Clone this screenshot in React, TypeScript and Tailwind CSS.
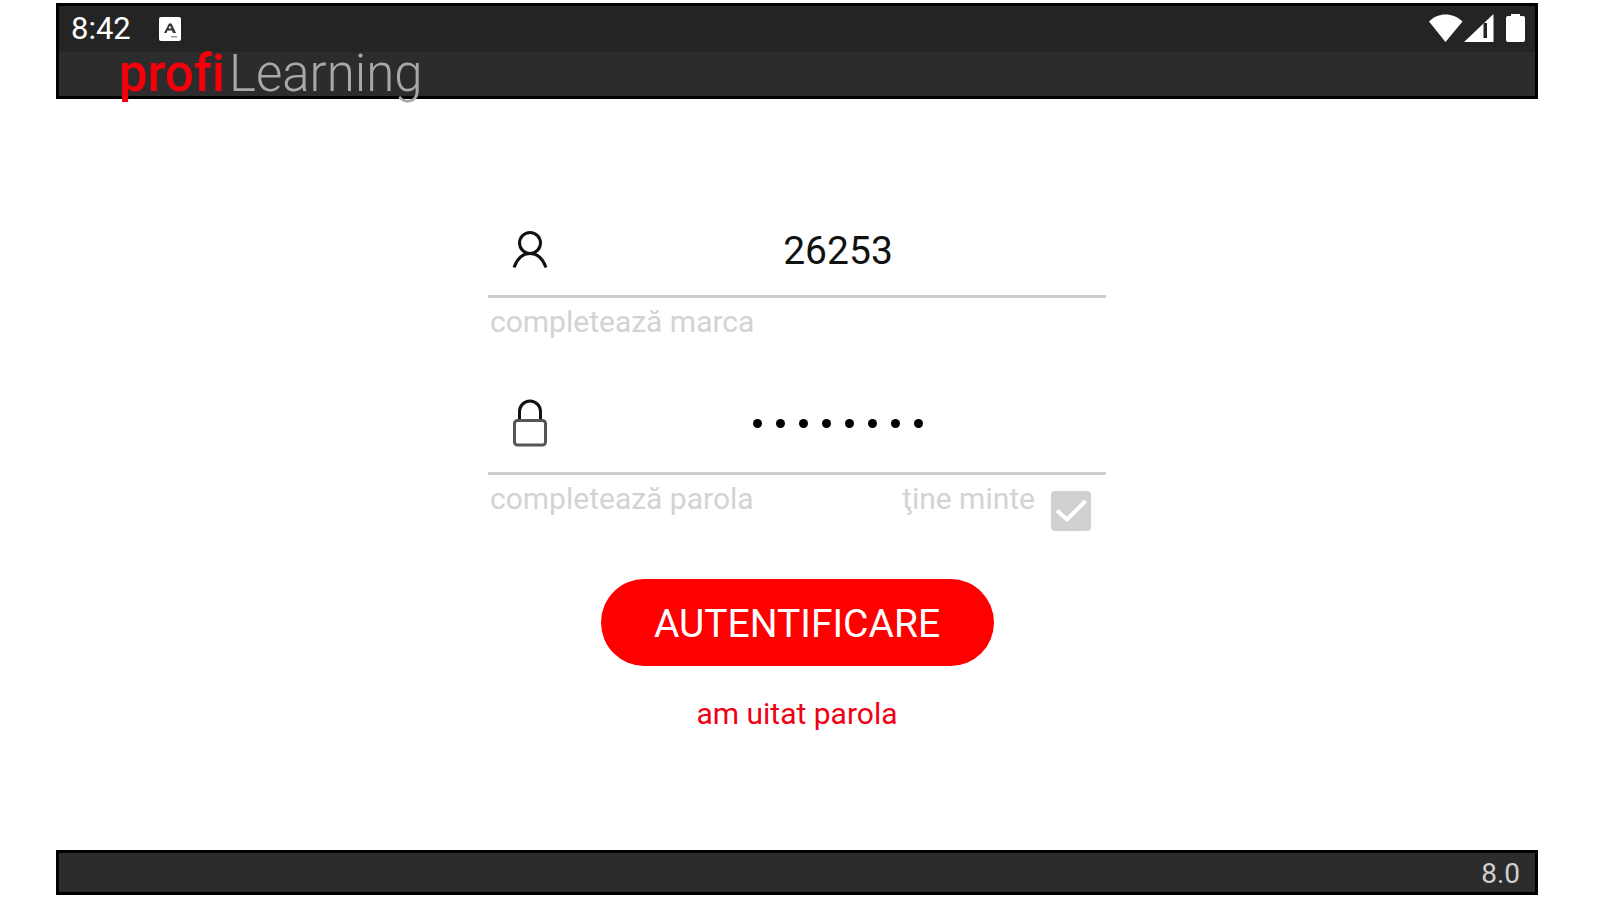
import { useState } from "react";
import type { InputHTMLAttributes, ReactNode } from "react";

function NotificationIcon() {
    return (
        <svg viewBox="0 0 22 24" className="w-[22px] h-6" aria-hidden="true">
            <rect width="22" height="24" rx="2" fill="#fff" />
            <path fillRule="evenodd" d="M5 16 10 6.500h2.500L17 16h-3l-1-2.500H8.500L7.500 16zM9.500 11.500h3L11 8.500z" fill="#333" />
            <path d="M12 19h6v1.500h-6z" fill="#999" />
        </svg>
    );
}

function StatusIcons() {
    return (
        <svg viewBox="0 0 98 30" className="w-[98px] h-[30px]" fill="#fff" aria-label="Wi-Fi, semnal, baterie" role="img">
            <path d="M1 7.500C10-2 25-2 34.500 7.500L17.500 28z" />
            <path fillRule="evenodd" d="M65.500 0v28H36zM55.500 9v15h3.500V9z" />
            <path d="M83 0h9v2h3q2 0 2 2v22q0 2-2 2H80q-2 0-2-2V4q0-2 2-2h3z" />
        </svg>
    );
}

function UserIcon() {
    return (
        <svg viewBox="0 0 36 38" className="w-9 h-[38px]" fill="none" stroke="#111" strokeWidth="3" aria-hidden="true">
            <circle cx="18" cy="12" r="10.500" />
            <path d="M2 36.500C5 28 10 22.500 18 22.500S31 28 34 36.500" />
        </svg>
    );
}

function LockIcon() {
    return (
        <svg viewBox="0 0 36 48" className="w-9 h-12" fill="none" aria-hidden="true">
            <path d="M7.500 21V12.500a10.500 10.500 0 0 1 21 0V21" stroke="#111" strokeWidth="3" />
            <rect x="2.500" y="21.500" width="31" height="24.500" rx="3" stroke="#555" strokeWidth="3" />
        </svg>
    );
}

interface FieldProps extends InputHTMLAttributes<HTMLInputElement> {
    icon: ReactNode;
    mask?: ReactNode;
}
function Field({ icon, mask, className, ...props }: FieldProps) {
    return (
        <div className="flex items-center border-b-3 border-[#cdcdcd]">
            <span className="flex w-[82px] shrink-0 pl-6">{icon}</span>
            <div className="relative min-w-0 flex-1">
                <input {...props} className={"block w-full bg-transparent text-center text-[39px] outline-none " + className} />
                {mask}
            </div>
        </div>
    );
}

// wide spaced dots drawn over the password input, which keeps its own text transparent
function PasswordDots({ length }: { length: number }) {
    return (
        <div className="pointer-events-none absolute inset-0 flex items-center justify-center gap-3.5" aria-hidden="true">
            {Array.from({ length }, (_, i) => (
                <span key={i} className="size-[9px] rounded-full bg-black" />
            ))}
        </div>
    );
}

export default function App() {
    const [mark, setMark] = useState("26253");
    const [password, setPassword] = useState("parola12");
    const [remember, setRemember] = useState(true);

    return (
        <div className="flex min-h-screen flex-col bg-white pt-[3px] pr-[62px] pb-[5px] pl-14 font-['Roboto',sans-serif]">
            <header className="border-3 border-black bg-[#2c2c2c] text-white">
                <div className="flex h-[46px] items-center justify-between bg-[#242424] pr-[9px] pl-3">
                    <div className="flex items-center gap-7 text-[31px] leading-10">
                        <span>8:42</span>
                        <NotificationIcon />
                    </div>
                    <StatusIcons />
                </div>
                <h1 className="flex h-11 items-center gap-1 pl-[60px] text-[51px] leading-[44px] font-light text-[#a8a8a8] [font-variant-ligatures:none]">
                    <span className="font-medium text-[#f5000a]">profi</span>
                    <span>Learning</span>
                </h1>
            </header>

            <main className="flex flex-1 flex-col items-center justify-center pb-2.5">
                <form className="flex w-full max-w-[618px] flex-col" onSubmit={(e) => e.preventDefault()}>
                    <Field
                        id="mark"
                        icon={<UserIcon />}
                        className="h-[90px] pt-0.5 text-[#111]"
                        value={mark}
                        onChange={(e) => setMark(e.target.value)}
                    />
                    <label htmlFor="mark" className="mt-1 pl-0.5 text-[30px] leading-10 text-[#d3d3d3]">completează marca</label>

                    <div className="mt-8">
                        <Field
                            id="password"
                            type="password"
                            icon={<LockIcon />}
                            mask={<PasswordDots length={password.length} />}
                            className="h-[98px] text-transparent caret-black"
                            value={password}
                            onChange={(e) => setPassword(e.target.value)}
                        />
                    </div>
                    <div className="flex items-start pr-[15px] text-[30px] leading-10 text-[#d3d3d3]">
                        <label htmlFor="password" className="mt-1 mr-auto pl-0.5">completează parola</label>
                        <label htmlFor="remember" className="mt-1 mr-4">ţine minte</label>
                        <span className="relative mt-4 block size-10">
                            <input
                                id="remember"
                                type="checkbox"
                                checked={remember}
                                onChange={(e) => setRemember(e.target.checked)}
                                className="block size-10 appearance-none rounded bg-[#d0d0d0]"
                            />
                            {remember && (
                                <svg viewBox="0 0 40 40" className="pointer-events-none absolute inset-0 size-10" fill="none" stroke="#fff" strokeWidth="4" aria-hidden="true">
                                    <path d="M6 19.500 16 28.500 34.500 10" />
                                </svg>
                            )}
                        </span>
                    </div>

                    <button type="submit" className="mt-12 h-[87px] w-[393px] self-center rounded-full bg-[#ff0000] pt-1 text-[39px] text-white">
                        AUTENTIFICARE
                    </button>
                    <a href="#parola" className="mt-7 self-center text-[30px] leading-10 text-[#f00014]">am uitat parola</a>
                </form>
            </main>

            <footer className="flex h-[45px] items-center justify-end border-3 border-black bg-[#2c2c2c] pt-0.5 pr-[15px] text-[28px] text-[#cfcfcf]">
                8.0
            </footer>
        </div>
    );
}
